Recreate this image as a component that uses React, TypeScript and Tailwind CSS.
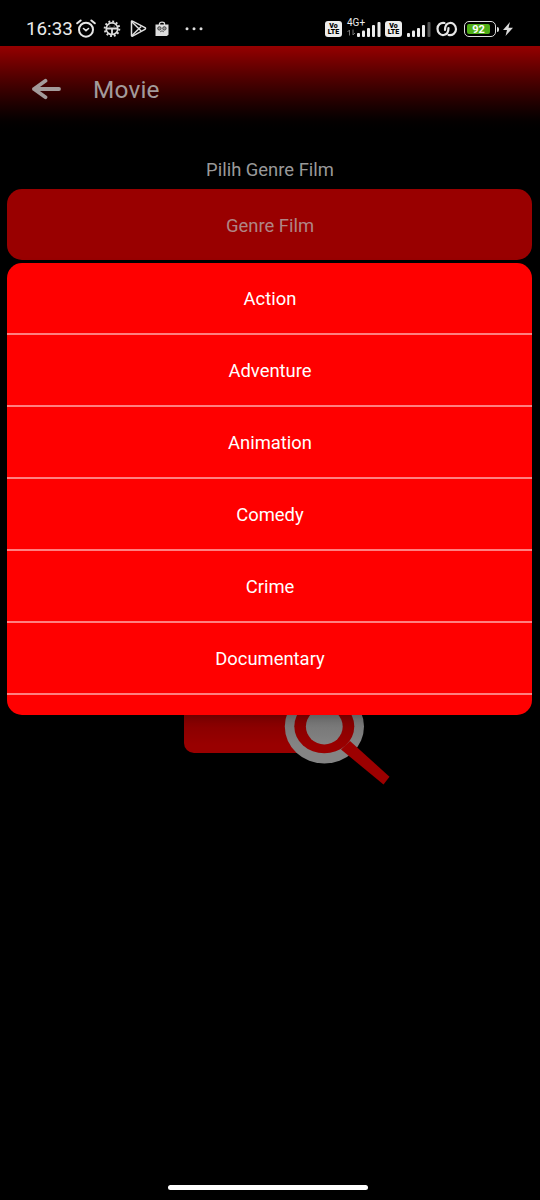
const genres = ["Action", "Adventure", "Animation", "Comedy", "Crime", "Documentary"];

function AlarmIcon() {
  return (
    <svg width="20" height="20" viewBox="0 0 20 20" fill="none" stroke="#e6e6e6" strokeWidth="2" strokeLinecap="round">
      <circle cx="10" cy="10.7" r="7" />
      <path d="M1.2 4.3 4.600 1.500M18.800 4.300 15.400 1.500" />
      <path d="M7.500 9.500 10 11.700l2.500-2.200" strokeWidth="1.6" />
    </svg>
  );
}

function GearIcon() {
  return (
    <svg width="18" height="18" viewBox="0 0 18 18" fill="none" stroke="#dcdcdc">
      <circle cx="9" cy="8.700" r="7.300" strokeWidth="2" strokeDasharray="1.9 1.92" />
      <circle cx="9" cy="8.700" r="5.800" strokeWidth="1.7" />
      <path d="M3.500 8.500h11M9 8.700v6" strokeWidth="1.8" />
      <path d="M6 6.200h1.500M10.500 6.200H12" strokeWidth="1" opacity="0.5" />
    </svg>
  );
}

function PlayIcon() {
  return (
    <svg width="17" height="18" viewBox="0 0 17 18" fill="none" stroke="#e0e0e0" strokeLinejoin="round">
      <path d="M1.500 1.600v14c0 .6.5.8 1 .5L15 9.300c.7-.4.7-1.200 0-1.600L2.500 1.100c-.5-.3-1-.1-1 .5Z" strokeWidth="1.500" />
      <path d="m2 2 9.200 9M2 15.500l9.200-9" strokeWidth="1.400" />
    </svg>
  );
}

function BagIcon() {
  return (
    <svg width="14" height="16" viewBox="0 0 14 16" fill="none">
      <path d="M4.500 4V2.600C4.500.7 9.500.7 9.500 2.600V4" stroke="#ddd" strokeWidth="1.300" />
      <path d="M.5 3.500h13v10.200L11.800 15H.5Z" fill="#dedede" />
      <circle cx="4.400" cy="7.400" r="1.700" fill="#999" stroke="#444" strokeWidth="1" />
      <circle cx="9.400" cy="7.400" r="1.700" fill="#999" stroke="#444" strokeWidth="1" />
      <path d="M5.200 10.800 7 9.800l1.800 1" stroke="#555" />
    </svg>
  );
}

function VolteBadge() {
  return (
    <span className="flex h-[16px] w-[17px] shrink-0 flex-col items-center justify-center rounded-[3px] bg-[#ededed] text-[7px] leading-[6.5px] font-black text-black">
      <span>Vo</span>
      <span>LTE</span>
    </span>
  );
}

function Signal({ weak = false }: { weak?: boolean }) {
  return (
    <svg width="25" height="16" viewBox="0 0 25 16" fill="#ededed">
      <rect x="0" y="12" width="3" height="4" rx="1" />
      <rect x="5" y="9.5" width="3" height="6.5" rx="1" />
      <rect x="10" y="7" width="3" height="9" rx="1" />
      <rect x="15" y="4" width="3" height="12" rx="1" />
      <rect x="20.5" y="1" width="3" height="15" rx="1" fill={weak ? "#555" : "#ededed"} />
    </svg>
  );
}

function StatusBar() {
  return (
    <div className="flex h-[46px] shrink-0 items-center pt-[12px] pl-[26px] text-[#ebebeb]">
      <span className="w-[50px] text-[18.8px] leading-5 whitespace-nowrap">16:33</span>
      <span className="w-[27px]"><AlarmIcon /></span>
      <span className="w-[27px]"><GearIcon /></span>
      <span className="w-[25px]"><PlayIcon /></span>
      <span className="w-[30px]"><BagIcon /></span>
      <svg width="18" height="4" viewBox="0 0 18 4" fill="#ddd">
        <circle cx="2" cy="1.700" r="1.500" /><circle cx="9" cy="1.700" r="1.500" /><circle cx="16" cy="1.700" r="1.500" />
      </svg>
      <span className="ml-[122px]"><VolteBadge /></span>
      <div className="relative ml-[15px] w-[37px]">
        <Signal />
        <span className="absolute -top-[4px] -left-[10px] text-[10px] leading-[11px]">4G+</span>
        <svg className="absolute top-[8px] -left-[10px]" width="9" height="7" viewBox="0 0 9 7" fill="none" stroke="#777">
          <path d="M2.500 6.500V1L.5 3M6 .5V6l2-2" />
        </svg>
      </div>
      <span className="-ml-[9px]"><VolteBadge /></span>
      <span className="ml-[5px] w-[25px]"><Signal weak /></span>
      <svg className="ml-[4px]" width="22" height="16" viewBox="0 0 22 16" fill="none" stroke="#e6e6e6" strokeWidth="2.200" strokeLinecap="round">
        <path d="M8.500 2C4.500 1.200 1.500 4 1.500 7.800c0 4 3 6.600 6.200 6.200 3.300-.4 4.800-3 4.800-7" />
        <path d="M12.500 14c4 .8 7.500-2 7.500-5.800 0-4-3-6.600-6.200-6.200C10.500 2.400 9 5 9 9" />
      </svg>
      <div className="ml-[6px] flex h-[16px] w-[32px] items-center rounded-[5px] border-[1.5px] border-[#dcdcdc] p-[2px]">
        <span className="flex h-full w-[23px] items-center justify-center rounded-[2px] bg-[#4eae16] text-[11px] leading-none font-bold text-white">92</span>
      </div>
      <span className="ml-px h-[5px] w-[2px] rounded-r bg-[#ddd]" />
      <svg className="ml-[4px]" width="10" height="14" viewBox="0 0 10 14" fill="#ddd"><path d="M7 0 0 8h4L2.500 14 10 5.800H5.500Z" /></svg>
    </div>
  );
}

function SearchIllustration() {
  return (
    <svg className="-mt-[7px] ml-[184px] block shrink-0" width="210" height="80" viewBox="184 708 210 80">
      <defs>
        <linearGradient id="cardShade" x1="0" y1="715" x2="0" y2="745" gradientUnits="userSpaceOnUse">
          <stop offset="0" stopColor="#820000" /><stop offset="1" stopColor="#990000" />
        </linearGradient>
        <linearGradient id="lensShade" x1="0" y1="715" x2="0" y2="745" gradientUnits="userSpaceOnUse">
          <stop offset="0" stopColor="#727272" /><stop offset="1" stopColor="#848484" />
        </linearGradient>
      </defs>
      <path d="M184 708V743a10 10 0 0 0 10 10H325V708Z" fill="url(#cardShade)" />
      <ellipse cx="324.400" cy="726.500" rx="39.600" ry="37" fill="url(#lensShade)" />
      <path d="M341 749.500 350 741 389.500 776.700 383.500 784.400Z" fill="#9c0000" />
      <ellipse cx="324.300" cy="726.300" rx="30" ry="27" fill="url(#cardShade)" />
      <ellipse cx="324.300" cy="726.500" rx="18.400" ry="17.900" fill="url(#lensShade)" />
    </svg>
  );
}

export default function App() {
  return (
    <div className="flex h-[1200px] w-[540px] flex-col overflow-hidden bg-black font-['Roboto',sans-serif]">
      <StatusBar />
      <header className="flex h-[90px] shrink-0 items-center bg-linear-to-b from-[#960000] to-black pl-[32px] text-[#a39b9b]">
        <svg className="-mt-[4px]" width="29" height="22" viewBox="0 0 29 22" fill="none" stroke="currentColor" strokeWidth="3.800" strokeLinecap="round" strokeLinejoin="round">
          <path d="M27 11H2M13.500 2.800 2 11l11.500 8.200" />
        </svg>
        <h1 className="-mt-[2px] ml-[32px] text-[24.4px] leading-8 tracking-[0.2px]">Movie</h1>
      </header>
      <main className="flex flex-col">
        <p className="mt-[22px] text-center text-[18.4px] leading-6 text-[#999]">Pilih Genre Film</p>
        <button className="mr-[8px] ml-[7px] mt-[7px] h-[71px] rounded-[15px] bg-[#990000] pt-[2px] pl-px text-[18.4px] text-[#b08585]">Genre Film</button>
        <ul className="relative z-10 mr-[8px] ml-[7px] mt-[3px] h-[452px] overflow-hidden rounded-[15px] bg-[#ff0000] shadow-[0_3px_10px_rgba(0,0,0,0.2)]">
          {genres.map((genre) => (
            <li key={genre} className="flex h-[72px] items-center justify-center border-b-2 border-[#ff8080] pt-px pl-px text-[18.4px] text-white">{genre}</li>
          ))}
        </ul>
        <SearchIllustration />
      </main>
      <div className="mt-auto mb-[10px] ml-[-4px] h-[5px] w-[200px] shrink-0 self-center rounded-full bg-white" />
    </div>
  );
}
